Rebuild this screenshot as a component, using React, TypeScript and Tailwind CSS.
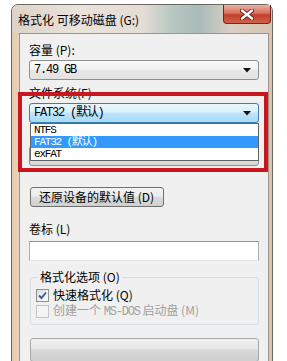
import React from "react";

const ui = { fontFamily: '"Noto Sans CJK SC", "Noto Sans", sans-serif' };
const mono = {
  fontFamily: '"Liberation Mono", "Noto Sans CJK SC", monospace',
  letterSpacing: "-1.2px",
};

const Arrow = () => (
  <svg width="8" height="5" viewBox="0 0 8 5" className="shrink-0">
    <path d="M0 0 H8 L4 4.5 Z" fill="#111" />
  </svg>
);

const Combo = ({ text, focused }: { text: string; focused?: boolean }) => (
  <div
    className={
      "h-[20px] flex items-center justify-between pl-[4px] pr-[7px] rounded-[3px] border text-[12px] leading-[12px] " +
      (focused
        ? "border-[#3c7fb1] bg-[linear-gradient(#eaf6fd,#d9f0fc_45%,#bee6fd_50%,#a7d9f5)]"
        : "border-[#8e8f8f] bg-[linear-gradient(#fafafa,#f2f2f2_45%,#e8e8e8_50%,#e2e2e2)]")
    }
  >
    <span style={mono}>{text}</span>
    <Arrow />
  </div>
);

const App = () => {
  return (
    <div className="relative w-[287px] h-[361px] overflow-hidden bg-white" style={ui}>
      <div className="ml-[11px] mt-[4px] w-[262px] h-[400px] rounded-t-[7px] border border-[#6e6862] bg-[linear-gradient(90deg,#e6cdb2,#ecdccb_8%,#efe6dc_50%,#e9d8c6_92%,#dfc2a4)] flex flex-col">
        <div className="h-[28px] flex justify-between items-start pl-[6px] pr-[1px] rounded-t-[6px] bg-[linear-gradient(90deg,#ddd3c8,#e9e3dc_25%,#e4ddd5_50%,#b7c6c1_62%,#a9bcb8_72%,#d9cfc4_84%,#d8c4b0)]">
          <span className="self-center text-[12px] leading-[16px] text-black pt-[2px]">
            格式化 可移动磁盘 (G:)
          </span>
          <div className="w-[48px] h-[19px] flex items-center justify-center rounded-b-[4px] border border-t-0 border-[#6b2a22] bg-[linear-gradient(#eab1a3,#d9705e_45%,#c4402c_55%,#d2604a)]">
            <svg width="14" height="11" viewBox="0 0 14 11">
              <path d="M2 1.5 L12 9.5 M12 1.5 L2 9.5" stroke="#5b2219" strokeWidth="4.2" strokeLinecap="round" />
              <path d="M2 1.5 L12 9.5 M12 1.5 L2 9.5" stroke="#ffffff" strokeWidth="2.4" strokeLinecap="round" />
            </svg>
          </div>
        </div>

        <div className="flex-1 pl-[7px] pr-[3px]">
          <div className="h-full bg-[#f0f0f0] border border-[#9a9590] px-[9px] pt-[8px] flex flex-col text-[12px] leading-[16px] text-black">
            <span>容量 (P):</span>
            <div className="mt-[2px]">
              <Combo text="7.49 GB" />
            </div>

            <span className="mt-[5px]">文件系统(F)</span>
            <div className="relative mt-[2px]">
              <Combo text="FAT32 (默认)" focused />
              <div className="absolute left-[1px] right-0 top-full z-10 bg-white border border-[#646464] text-[11px] leading-[12px]">
                <div className="h-[12px] pl-[3px] overflow-hidden" style={mono}>NTFS</div>
                <div className="h-[12px] pl-[3px] overflow-hidden bg-[#3399ff] text-white" style={mono}>FAT32 (默认)</div>
                <div className="h-[12px] pl-[3px] overflow-hidden" style={mono}>exFAT</div>
              </div>
            </div>

            {/* allocation unit row, hidden under the open list */}
            <div className="mt-[5px] h-[16px]" />
            <div className="mt-[2px] h-[20px] rounded-[3px] border border-[#8e8f8f] bg-[linear-gradient(#fafafa,#f2f2f2_45%,#e8e8e8_50%,#d6d6d6)]" />

            <button className="mt-[21px] w-[134px] h-[20px] ml-[1px] rounded-[3px] border border-[#707070] bg-[linear-gradient(#f2f2f2,#ebebeb_45%,#dddddd_50%,#cfcfcf)] text-[12px] leading-[16px] text-left pl-[8px]">
              还原设备的默认值 (D)
            </button>

            <span className="mt-[14px]">卷标 (L)</span>
            <div className="mt-[4px] h-[20px] bg-white border border-[#abadb3] border-t-[#8f9499] border-b-[#e3e9ef]" />

            <div className="relative mt-[16px] ml-[1px] border border-[#d5dfe5] rounded-[3px] pt-[9px] pb-[5px] pl-[5px] flex flex-col">
              <span className="absolute -top-[9px] left-[7px] px-[2px] bg-[#f0f0f0]">格式化选项 (O)</span>
              <div className="flex items-center gap-[4px] h-[16px]">
                <div className="w-[13px] h-[13px] border border-[#8e8f8f] bg-[linear-gradient(135deg,#dcdcdc,#ffffff)] flex items-center justify-center">
                  <svg width="9" height="9" viewBox="0 0 9 9">
                    <path d="M1 4.5 L3.5 7 L8 1.5" stroke="#3a5ca8" strokeWidth="1.9" fill="none" />
                  </svg>
                </div>
                <span className="leading-[16px]">快速格式化 (Q)</span>
              </div>
              <div className="flex items-center gap-[4px] h-[16px] text-[#a0a0a0]">
                <div className="w-[13px] h-[13px] border border-[#c4c4c4] bg-[#f4f4f4]" />
                <span className="leading-[16px]">
                  创建一个 <span style={mono}>MS-DOS</span> 启动盘 (M)
                </span>
              </div>
            </div>

            <div className="mt-[13px] ml-[1px] h-[24px] rounded-[3px] border border-[#a9a9a9] bg-[linear-gradient(#f2f2f2,#e6e6e6_45%,#d8d8d8_50%,#cfcfcf)]" />
          </div>
        </div>
      </div>

      <div className="absolute left-[18px] top-[92px] w-[250px] h-[80px] border-4 border-[#c9161f] pointer-events-none" />
    </div>
  );
};

export default App;
